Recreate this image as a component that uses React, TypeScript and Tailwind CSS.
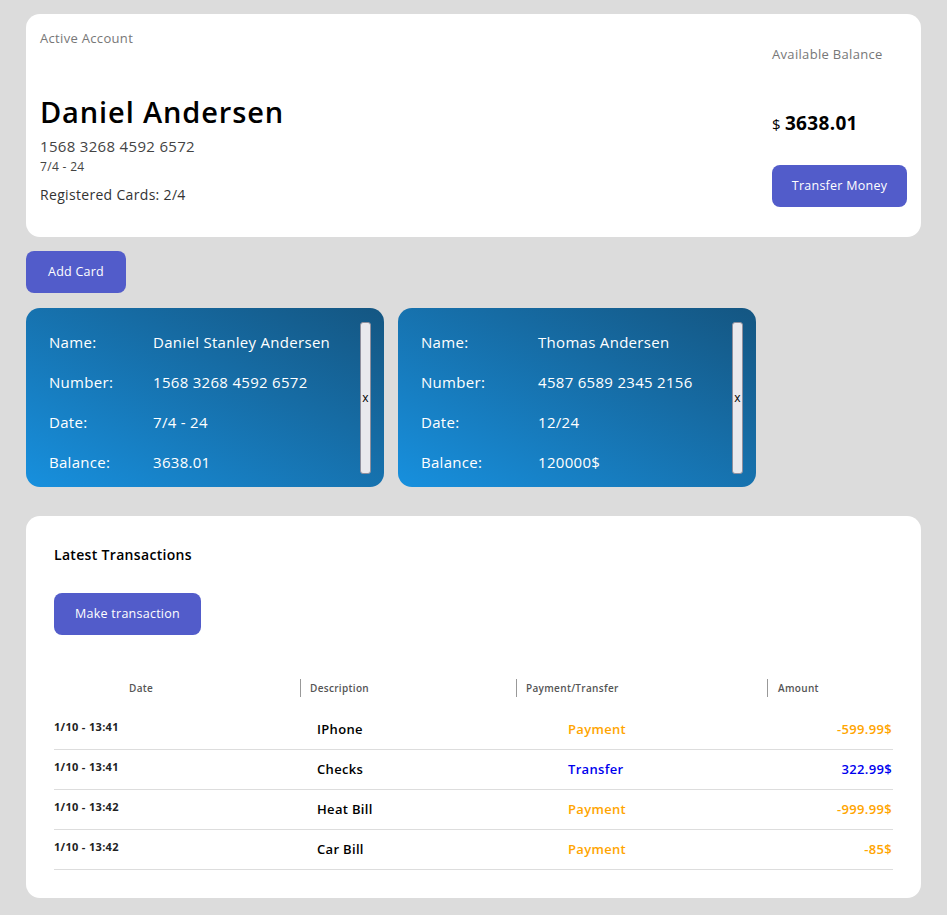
import React from 'react'

const font = { fontFamily: '"Open Sans", "Noto Sans", sans-serif' }

const cards = [
  { name: 'Daniel Stanley Andersen', number: '1568 3268 4592 6572', date: '7/4 - 24', balance: '3638.01', labelW: 'w-[104px]' },
  { name: 'Thomas Andersen', number: '4587 6589 2345 2156', date: '12/24', balance: '120000$', labelW: 'w-[117px]' },
]

const rows = [
  { date: '1/10 - 13:41', desc: 'IPhone', kind: 'Payment', amount: '-599.99$' },
  { date: '1/10 - 13:41', desc: 'Checks', kind: 'Transfer', amount: '322.99$' },
  { date: '1/10 - 13:42', desc: 'Heat Bill', kind: 'Payment', amount: '-999.99$' },
  { date: '1/10 - 13:42', desc: 'Car Bill', kind: 'Payment', amount: '-85$' },
]

function Btn({ children, className = '' }: { children: React.ReactNode; className?: string }) {
  return (
    <button className={`h-[42px] bg-[#525cca] text-white text-[12.5px] tracking-[0.02em] rounded-lg ${className}`}>
      {children}
    </button>
  )
}

function Card({ c }: { c: typeof cards[0] }) {
  return (
    <div className="w-[358px] h-[179px] rounded-[14px] bg-gradient-to-tr from-[#1790de] to-[#145682] flex items-center pl-[23px] pr-[13px] text-white">
      <div className="flex-1 flex flex-col gap-[19px] text-[15px] tracking-[0.02em] pt-[10px]">
        {[['Name:', c.name], ['Number:', c.number], ['Date:', c.date], ['Balance:', c.balance]].map(([k, v]) => (
          <div key={k} className="flex leading-[21px]">
            <span className={c.labelW}>{k}</span>
            <span>{v}</span>
          </div>
        ))}
      </div>
      <button className="w-[11px] h-[152px] bg-[#e9e9ed] border border-[#8f8f9d] rounded-[3px] text-black text-[12px] flex items-center justify-center overflow-visible leading-none">
        x
      </button>
    </div>
  )
}

export default function App() {
  return (
    <div className="min-h-[915px] bg-[#dcdcdc] px-[26px] pt-[14px] pb-4" style={font}>
      {/* account summary */}
      <div className="w-[895px] h-[223px] bg-white rounded-[14px] flex justify-between pl-[14px] pr-[14px] tracking-[0.02em]">
        <div className="flex flex-col pt-[15px]">
          <span className="text-[13px] text-[#777]">Active Account</span>
          <span className="mt-[44px] text-[29px] font-semibold text-black leading-[38px] tracking-[0.03em]">Daniel Andersen</span>
          <span className="text-[15px] text-[#444] mt-[4px]">1568 3268 4592 6572</span>
          <span className="text-[12px] text-[#444] mt-[1px]">7/4 - 24</span>
          <span className="text-[14px] text-[#333] mt-[8px]">Registered Cards: 2/4</span>
        </div>
        <div className="flex flex-col pt-[31px] w-[135px]">
          <span className="text-[13px] text-[#777]">Available Balance</span>
          <span className="mt-[44px] flex items-baseline gap-[4px]">
            <span className="text-[15px]">$</span>
            <span className="text-[19px] font-bold text-black">3638.01</span>
          </span>
          <Btn className="mt-[28px] w-[135px]">Transfer Money</Btn>
        </div>
      </div>

      <Btn className="mt-[14px] w-[100px]">Add Card</Btn>

      <div className="mt-[15px] flex gap-[14px]">
        {cards.map(c => <Card key={c.number} c={c} />)}
      </div>

      {/* transactions */}
      <div className="mt-[29px] w-[895px] bg-white rounded-[14px] px-[28px] pt-[28px] pb-[28px] tracking-[0.02em]">
        <h2 className="text-[14px] font-semibold text-black leading-[22px]">Latest Transactions</h2>
        <Btn className="mt-[27px] w-[147px]">Make transaction</Btn>
        <div className="mt-[44px] grid grid-cols-[246px_216px_251px_126px] text-[10px] font-semibold text-[#555] h-[18px] items-center">
          <div className="pl-[75px]">Date</div>
          <div className="border-l border-[#999] pl-[9px] h-full flex items-center">Description</div>
          <div className="border-l border-[#999] pl-[9px] h-full flex items-center">Payment/Transfer</div>
          <div className="border-l border-[#999] pl-[10px] h-full flex items-center">Amount</div>
        </div>
        <div className="mt-[13px]">
          {rows.map((r, i) => {
            const col = r.kind === 'Payment' ? 'text-[#ffa500]' : 'text-[#0000ee]'
            return (
              <div key={i} className="grid grid-cols-[246px_216px_251px_126px] h-[40px] items-center border-b border-[#ddd]">
                <div className="text-[11px] font-bold text-[#222] -mt-[4px]">{r.date}</div>
                <div className="pl-[17px] text-[13px] font-semibold text-black">{r.desc}</div>
                <div className={`pl-[52px] text-[13px] font-semibold ${col}`}>{r.kind}</div>
                <div className={`text-right pr-[1px] text-[13px] font-semibold ${col}`}>{r.amount}</div>
              </div>
            )
          })}
        </div>
      </div>
    </div>
  )
}
